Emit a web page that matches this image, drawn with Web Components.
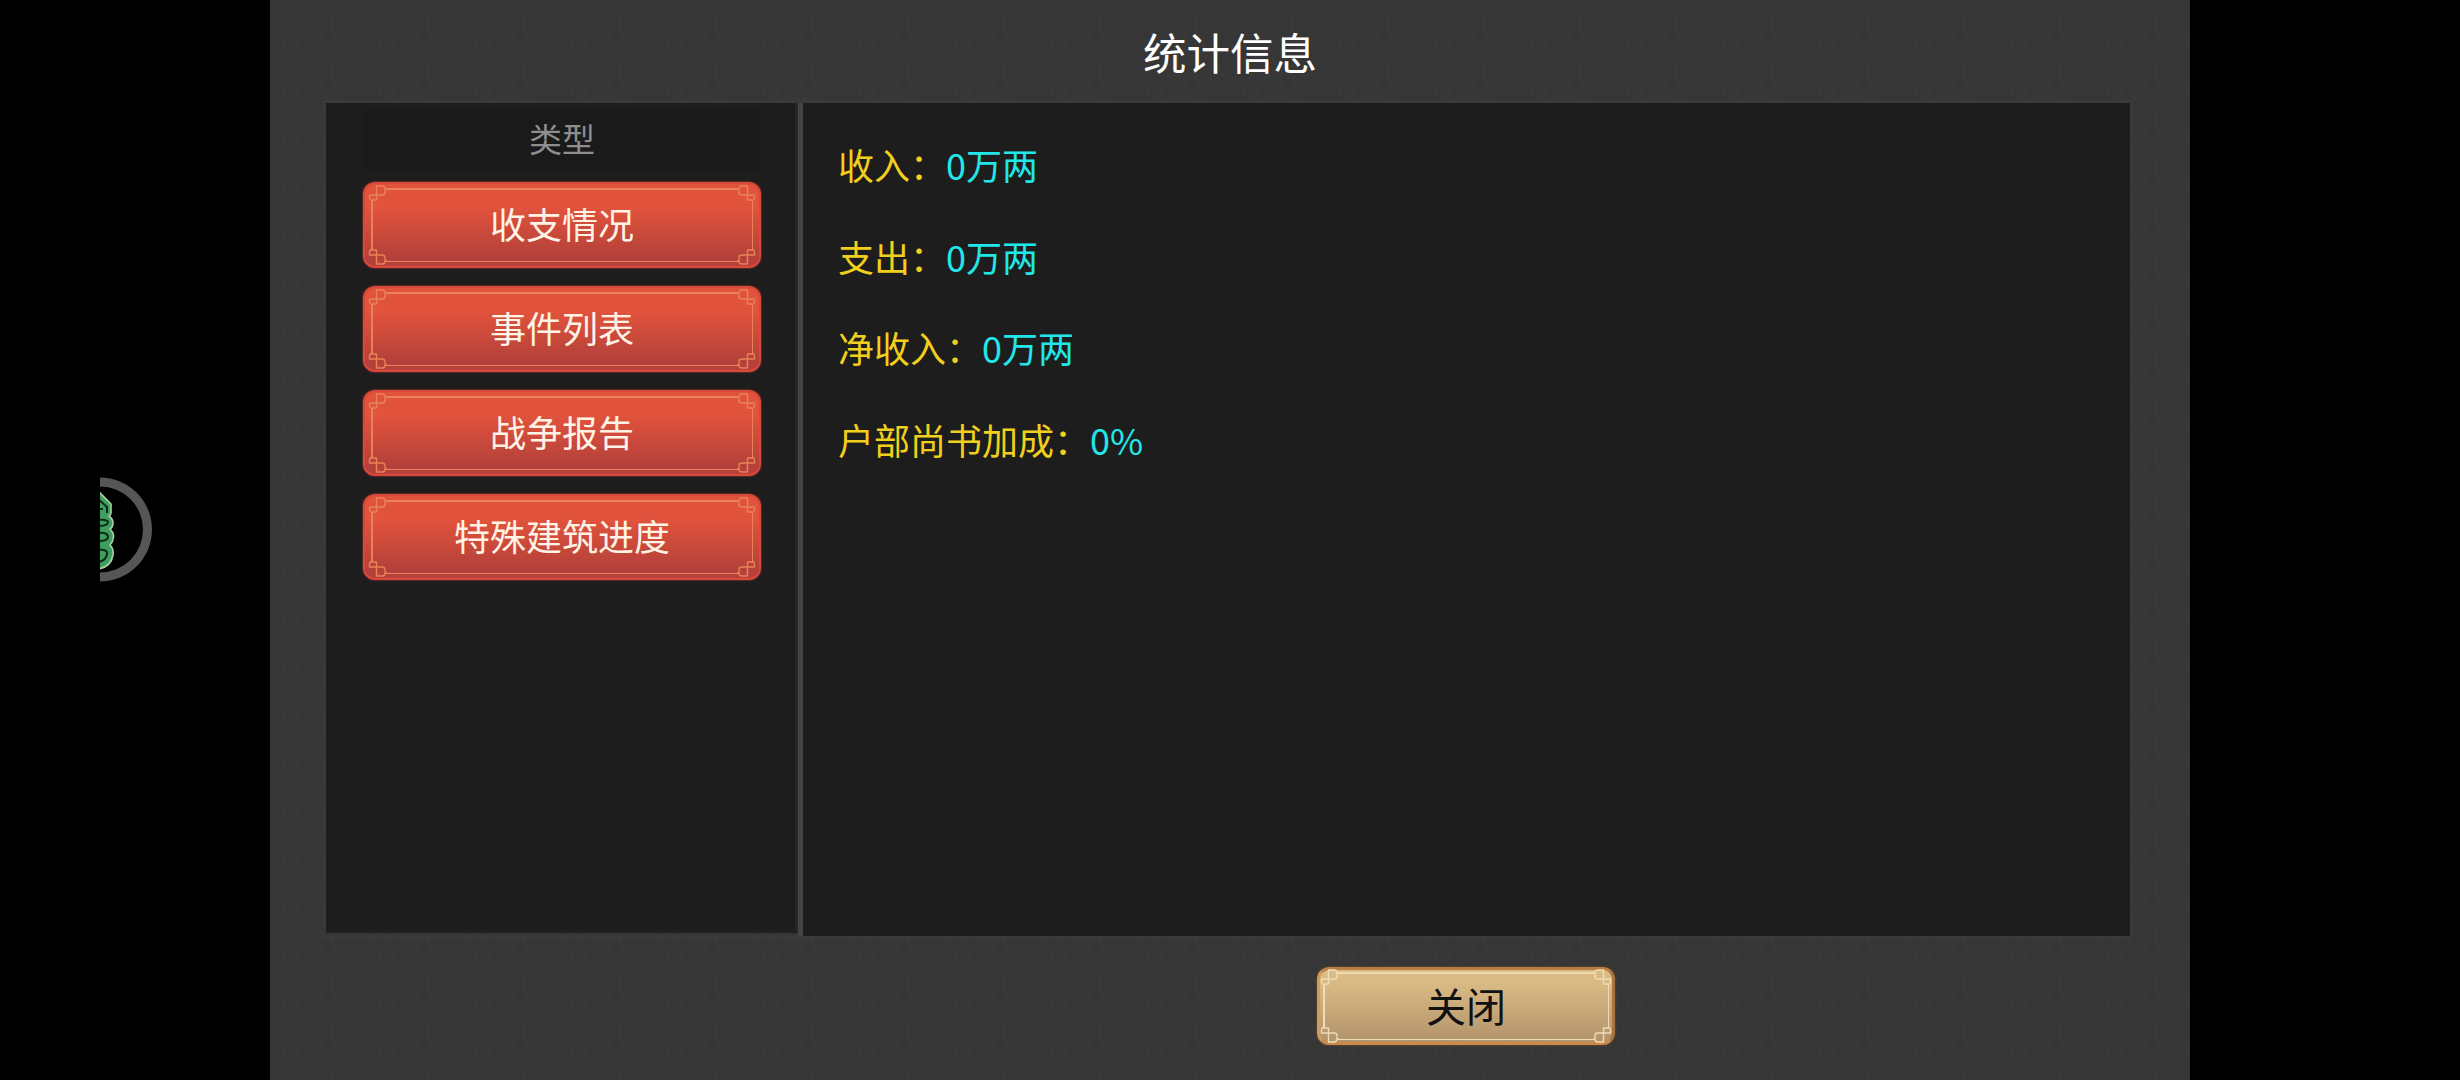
<!DOCTYPE html>
<html lang="zh"><head><meta charset="utf-8"><style>
html,body{margin:0;padding:0;background:#000;height:1080px;overflow:hidden;font-family:"Noto Sans CJK SC","Roboto",sans-serif}
</style></head><body>
<stat-screen></stat-screen>
<script>
const ornament=(col)=>`<path d="M1 13V12H5.500V-2H11Q14-2 14 1V4.500Q14 7 11 7H-1.500Q-2 12 1 13M14 1H16" fill="none" stroke="${col}" stroke-width="1.400" stroke-linejoin="round"/>`;
class OrnateButton extends HTMLElement{
 constructor(){super();const s=this.attachShadow({mode:'open'});
 s.innerHTML=`<style>
 :host{display:flex;box-sizing:border-box;position:relative;align-items:center;justify-content:center;height:86px;padding-bottom:5px;border-radius:12px;
  background:linear-gradient(#e1533c 0%,#e1533c 28%,#b5413a 88%,#b5413a 100%);border:2px solid #d8493a;color:#fff3e6;font-size:36px;line-height:1;box-shadow:0 0 2px #d8493a;--line:#e98259}
 :host([tone=gold]){background:linear-gradient(#dcbd85 0%,#d9b983 20%,#b2936b 100%);border:3px solid #b97f42;border-left-color:#d19a5e;border-right-color:#a9743f;border-bottom-color:#c98a4c;color:#111;font-size:40px;--line:#eedcb6;height:78px;width:298px;padding-bottom:3px;box-shadow:0 0 3px #6b4a24}
 .line{position:absolute;inset:4px 6px 4px 6px;pointer-events:none}
 :host([tone=gold]) .line{inset:2px 3px 2px 3px}
 .edge{position:absolute;background:var(--line)}
 .t,.b{height:1.500px;left:15px;right:15px}.t{top:0}.b{bottom:0}
 .l,.r{width:1.500px;top:13px;bottom:13px}.l{left:0}.r{right:0}
 svg{position:absolute;width:16px;height:14px;overflow:visible}
 .tl{left:0;top:0}
 .tr{right:0;top:0;transform:scaleX(-1)}
 .bl{left:0;bottom:0;transform:scaleY(-1)}
 .br{right:0;bottom:0;transform:scale(-1)}
 </style>
 <div class="line"><i class="edge t"></i><i class="edge b"></i><i class="edge l"></i><i class="edge r"></i>
 ${['tl','tr','bl','br'].map(c=>`<svg class="${c}" viewBox="0 0 16 14">${ornament(this.getAttribute('tone')=='gold'?'#eedcb6':'#e98259')}</svg>`).join('')}
 </div><slot></slot>`;}
}
customElements.define('ornate-button',OrnateButton);

class StatRow extends HTMLElement{
 constructor(){super();const s=this.attachShadow({mode:'open'});
 s.innerHTML=`<style>:host{display:block;height:91.6px;line-height:91.6px;font-size:36px;color:#f2cf1d;white-space:nowrap}
 b{font-weight:400;color:#22e6ea}</style>${this.getAttribute('label')}：<b>${this.getAttribute('value')}</b>`;}
}
customElements.define('stat-row',StatRow);

class SideMenu extends HTMLElement{
 constructor(){super();const s=this.attachShadow({mode:'open'});
 s.innerHTML=`<style>:host{display:flex;flex-direction:column;box-sizing:border-box;width:472px;height:830px;background:#1d1d1d;padding:7px 34px 0 37px;border-right:3px solid #262626;border-bottom:3px solid #212121}
 .head{height:60px;box-sizing:border-box;padding-bottom:3px;background:#1a1a1a;display:flex;align-items:center;justify-content:center;color:#8e8e8e;font-size:33px;line-height:1;margin-bottom:12px}
 .list{display:flex;flex-direction:column;gap:18px}</style>
 <div class="head">类型</div><div class="list"><slot></slot></div>`;}
}
customElements.define('side-menu',SideMenu);

class StatScreen extends HTMLElement{
 constructor(){super();const s=this.attachShadow({mode:'open'});
 s.innerHTML=`<style>
 :host{display:flex;width:2460px;height:1080px;background:#000;position:relative}
 .ball{position:absolute;left:100px;top:477px;width:52px;height:105px;overflow:hidden}
 .frame{margin-left:270px;width:1920px;height:1080px;background:#363636;position:relative;display:flex;flex-direction:column;overflow:hidden}
 .bg{position:absolute;inset:0;width:100%;height:100%}
 .title{position:relative;height:103px;display:flex;align-items:center;justify-content:center;color:#fff;font-size:43.500px;line-height:1;box-sizing:border-box;padding-top:0}
 .main{position:relative;display:flex;margin-left:56px;width:1804px;height:833px;align-items:flex-start;box-shadow:0 0 0 3px rgba(255,255,255,.015)}
 .rule{width:5px;height:833px;background:#434343;flex:none}
 .content{flex:1;height:833px;background:#1d1d1d;padding:16px 0 0 35px;box-sizing:border-box}
 .foot{position:relative;display:flex;padding:31px 0 0 1047px}
 </style>
 <svg class="ball" viewBox="0 0 52 105">
  <path d="M0 0.500A52 52 0 0 1 0 104.500V95.500A43 43 0 0 0 0 9.500Z" fill="#565656"/>
  <path d="M-2 14L11 27V36Q11 38 9 39Q13 42 13 46Q13 50 10 52Q14 56 13.500 60Q13 65 10 68Q14 72 13 78Q11 90 -2 92Z" fill="#3d9e60" stroke="#a9d0a0" stroke-width="1.600" stroke-linejoin="round"/>
  <g fill="none" stroke="#0c2a1a" stroke-width="2">
   <path d="M-2 22L7 30V36"/><path d="M-2 32H3"/>
   <path d="M-2 43Q7 42 8 45Q8 49 -2 49"/>
   <path d="M-2 56Q8 55 8 60Q8 64 -2 64"/>
   <path d="M-2 73Q8 72 7 77Q6 84 -2 85"/>
  </g>
 </svg>
 <div class="frame">
  <svg class="bg"><defs><pattern id="sg" width="96" height="48" patternUnits="userSpaceOnUse">
   <g fill="none" stroke="#414141" stroke-width="1.500">
    <circle cx="48" cy="48" r="46"/><circle cx="48" cy="48" r="34"/><circle cx="48" cy="48" r="22"/>
    <circle cx="0" cy="24" r="46"/><circle cx="96" cy="24" r="46"/><circle cx="0" cy="24" r="34"/><circle cx="96" cy="24" r="34"/>
   </g></pattern></defs><rect width="100%" height="100%" fill="url(#sg)" opacity=".3"/></svg>
  <div class="title">统计信息</div>
  <div class="main">
   <side-menu>
    <ornate-button>收支情况</ornate-button>
    <ornate-button>事件列表</ornate-button>
    <ornate-button>战争报告</ornate-button>
    <ornate-button>特殊建筑进度</ornate-button>
   </side-menu>
   <div class="rule"></div>
   <div class="content">
    <stat-row label="收入" value="0万两"></stat-row>
    <stat-row label="支出" value="0万两"></stat-row>
    <stat-row label="净收入" value="0万两"></stat-row>
    <stat-row label="户部尚书加成" value="0%"></stat-row>
   </div>
  </div>
  <div class="foot"><ornate-button tone="gold">关闭</ornate-button></div>
 </div>`;}
}
customElements.define('stat-screen',StatScreen);
</script>
</body></html>
